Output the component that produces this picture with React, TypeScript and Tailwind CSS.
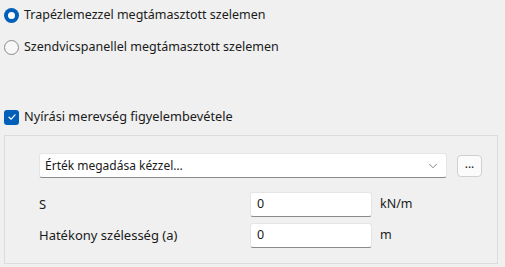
import { ChevronDown } from "lucide-react";

function Radio({ checked, label }: { checked?: boolean; label: string }) {
  return (
    <label className="flex h-[20px] items-center gap-[5px]">
      {checked ? (
        <span className="flex h-[15px] w-[15px] items-center justify-center rounded-full bg-[#005fb8]">
          <span className="h-[7px] w-[7px] rounded-full bg-white" />
        </span>
      ) : (
        <span className="h-[15px] w-[15px] rounded-full border border-[#8a8a8a] bg-[#f7f7f7]" />
      )}
      <span className="text-[12.5px] text-[#1a1a1a]">{label}</span>
    </label>
  );
}

function Field({ label, value, unit }: { label: string; value: string; unit: string }) {
  return (
    <div className="flex h-[25px] items-center">
      <span className="w-[211px] text-[13px] text-[#1a1a1a]">{label}</span>
      <div className="flex h-[25px] w-[122px] items-center rounded-[3px] border border-[#e5e5e5] border-b-[#8a8a8a] bg-white px-[6px] text-[12.5px] text-[#1a1a1a]">
        {value}
      </div>
      <span className="ml-[8px] text-[12.5px] text-[#1a1a1a]">{unit}</span>
    </div>
  );
}

export default function App() {
  return (
    <div
      className="h-[267px] w-[505px] overflow-hidden bg-[#f0f0f0] pl-[4px]"
      style={{ fontFamily: '"Noto Sans", "Open Sans", sans-serif' }}
    >
      <div className="pt-[5px]">
        <Radio checked label="Trapézlemezzel megtámasztott szelemen" />
      </div>
      <div className="mt-[12px]">
        <Radio label="Szendvicspanellel megtámasztott szelemen" />
      </div>

      <label className="mt-[50px] flex h-[20px] items-center gap-[5px]">
        <span className="flex h-[15px] w-[15px] items-center justify-center rounded-[3px] bg-[#005fb8]">
          <svg width="10" height="10" viewBox="0 0 10 10" fill="none">
            <path d="M2 5.2 L4.2 7.2 L8 2.8" stroke="white" strokeWidth="1.2" strokeLinecap="round" strokeLinejoin="round" />
          </svg>
        </span>
        <span className="text-[12.75px] text-[#1a1a1a]">Nyírási merevség figyelembevétele</span>
      </label>

      {/* group box */}
      <div className="mt-[8px] h-[129px] w-[494px] border border-[#dcdcdc] pl-[34px] pt-[17px]">
        <div className="flex items-center">
          <div className="flex h-[25px] w-[408px] items-center justify-between rounded-[3px] border border-[#e5e5e5] border-b-[#8a8a8a] bg-white pl-[5px] pr-[6px] text-[12px] text-[#1a1a1a]">
            <span>Érték megadása kézzel…</span>
            <ChevronDown size={14} strokeWidth={1.3} className="text-[#5f5f5f]" />
          </div>
          <button className="ml-[10px] flex h-[22px] w-[25px] items-center justify-center rounded-[4px] border border-[#d0d0d0] bg-[#fbfbfb] pb-[4px] text-[12px] text-[#1a1a1a]">
            ...
          </button>
        </div>
        <div className="mt-[14px] flex flex-col gap-[6px]">
          <Field label="S" value="0" unit="kN/m" />
          <Field label="Hatékony szélesség (a)" value="0" unit="m" />
        </div>
      </div>
    </div>
  );
}
